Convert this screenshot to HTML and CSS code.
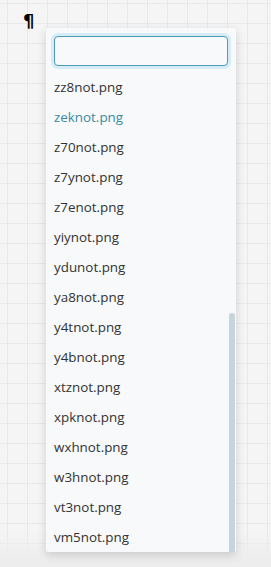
FILE: index.html
```html
<!DOCTYPE html>
<html lang="en">

<head>
    <meta charset="UTF-8" />
    <meta name="viewport" content="width=device-width, initial-scale=1.0" />
    <title>Image picker</title>
    <link rel="stylesheet" href="styles.css">
</head>

<body>
    <div class="canvas">
        <span class="pilcrow">¶</span>

        <div class="picker">
            <input class="picker-search" type="text" />

            <ul class="picker-list">
                <li>zz8not.png</li>
                <li class="active">zeknot.png</li>
                <li>z70not.png</li>
                <li>z7ynot.png</li>
                <li>z7enot.png</li>
                <li>yiynot.png</li>
                <li>ydunot.png</li>
                <li>ya8not.png</li>
                <li>y4tnot.png</li>
                <li>y4bnot.png</li>
                <li>xtznot.png</li>
                <li>xpknot.png</li>
                <li>wxhnot.png</li>
                <li>w3hnot.png</li>
                <li>vt3not.png</li>
                <li>vm5not.png</li>
            </ul>

            <div class="scroll-thumb"></div>
        </div>
    </div>
</body>

</html>
```

FILE: styles.css
```css
html,
body {
    margin: 0;
    height: 100%;
}

body {
    font-family: "Open Sans", sans-serif;
    background-color: #f5f5f5;
    background-image:
        linear-gradient(to bottom, transparent 530px, #ededed 560px),
        linear-gradient(to right, #e9e9e9 1px, transparent 1px),
        linear-gradient(to bottom, #e9e9e9 1px, transparent 1px);
    background-size: 100% 100%, 20px 20px, 20px 20px;
    background-position: 0 0, 7px 0, 0 3px;
}

.canvas {
    padding: 28px 0 0 46px;
    position: relative;
}

.pilcrow {
    position: absolute;
    left: 23px;
    top: 12px;
    line-height: 1;
    font-family: "DejaVu Sans", sans-serif;
    font-weight: bold;
    font-size: 18px;
    color: #000;
}

.picker {
    position: relative;
    width: 190px;
    box-sizing: border-box;
    padding: 8px 8px 0 0;
    background: #f7f9fb;
    border-radius: 2px;
    box-shadow: 0 3px 10px rgba(0, 0, 0, 0.16);
}

.picker-search {
    display: block;
    box-sizing: border-box;
    width: 174px;
    height: 30px;
    margin: 0 0 6px 8px;
    border: 1px solid #4b9bb1;
    border-radius: 4px;
    background: #f7f9fb;
    box-shadow: 0 0 0 3px #d6ebf5;
    outline: none;
}

.picker-list {
    list-style: none;
    margin: 0;
    padding: 0;
}

.picker-list li {
    height: 30px;
    line-height: 30px;
    padding-left: 8px;
    font-size: 13.4px;
    color: #333;
}

.picker-list li.active {
    color: #3b8aa3;
}

.scroll-thumb {
    position: absolute;
    right: 1px;
    bottom: 0;
    width: 6px;
    height: 239px;
    background: #c6d4db;
    border-radius: 3px 3px 0 0;
}
```
